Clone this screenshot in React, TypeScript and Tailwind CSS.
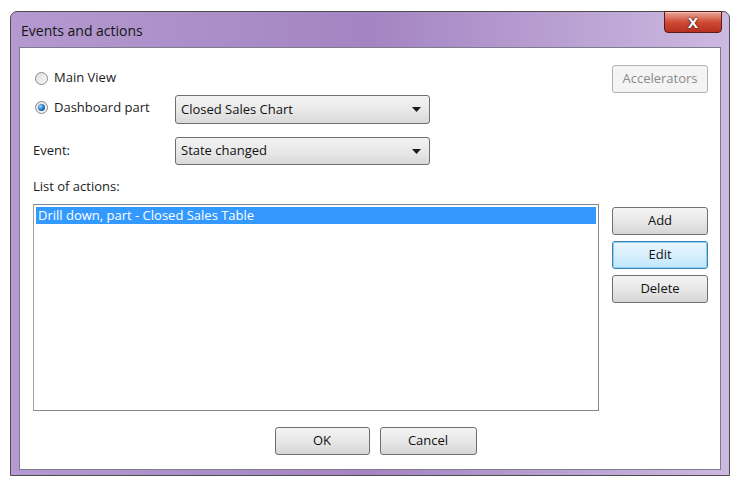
import { ReactNode } from 'react'

const font = { fontFamily: '"Open Sans", "Liberation Sans", Arial, sans-serif' }

function Radio({ checked, label }: { checked?: boolean; label: string }) {
  return (
    <div className="flex h-[16px] items-center gap-[6px]">
      <div className="flex h-[13px] w-[13px] items-center justify-center rounded-full border border-[#8a8a8a] bg-gradient-to-br from-[#dcdcdc] to-[#fbfbfb]">
        {checked && (
          <div className="h-[7px] w-[7px] rounded-full bg-[radial-gradient(circle_at_35%_35%,#9fd4ff,#1f6fc4_55%,#0d3d7a)]" />
        )}
      </div>
      <span className="text-[13px] text-[#1b1b1b]">{label}</span>
    </div>
  )
}

function Select({ value, height }: { value: string; height: string }) {
  return (
    <div
      className={`flex w-[255px] items-center justify-between rounded-[3px] border border-[#6f6f6f] bg-gradient-to-b from-[#f3f3f3] via-[#e9e9e9] to-[#d9d9d9] pl-[5px] pr-[8px] ${height}`}
    >
      <span className="text-[13px] text-[#111]">{value}</span>
      <svg width="9" height="5" viewBox="0 0 9 5">
        <path d="M0 0h9L4.5 5z" fill="#1a1a1a" />
      </svg>
    </div>
  )
}

function Button({ children, focused, disabled, w = 'w-[96px]' }: { children: ReactNode; focused?: boolean; disabled?: boolean; w?: string }) {
  let cls = 'border-[#6f6f6f] bg-gradient-to-b from-[#f4f4f4] via-[#e8e8e8] to-[#d6d6d6] text-[#111]'
  if (focused) cls = 'border-[#3c7fb1] bg-gradient-to-b from-[#eaf6fd] via-[#d9effc] to-[#bee6fd] text-[#111] shadow-[inset_0_0_0_1px_#8fd0f4]'
  if (disabled) cls = 'border-[#adb2b5] bg-[#f4f4f4] text-[#8a8a8a]'
  return (
    <div className={`flex h-[28px] items-center justify-center rounded-[3px] border text-[13px] ${w} ${cls}`}>
      {children}
    </div>
  )
}

export default function App() {
  return (
    <div className="min-h-[477px] w-[739px] bg-white pl-[10px] pt-[11px]" style={font}>
      {/* window frame */}
      <div className="relative flex h-[465px] w-[720px] flex-col rounded-t-[7px] border border-[#4d4d4d] bg-gradient-to-r from-[#b49ad0] via-[#a484c2] to-[#ccb9e0] px-[8px] pb-[5px]">
        {/* title bar */}
        <div className="flex h-[35px] items-center pl-[2px] pt-[1px]">
          <span className="text-[14px] text-[#151515]">Events and actions</span>
        </div>
        {/* close button */}
        <div className="absolute right-[7px] top-[-1px] flex h-[22px] w-[58px] items-center justify-center rounded-b-[4px] border border-[#5a1e17] bg-gradient-to-b from-[#e9a496] via-[#cf4b35] to-[#b6301f] shadow-[inset_0_1px_0_#f3c3b8]">
          <span className="text-[15px] font-bold leading-none text-white [text-shadow:0_0_2px_#3a1410,0_0_1px_#3a1410]">X</span>
        </div>

        {/* client area */}
        <div className="flex flex-1 flex-col border border-[#7d7d8d] bg-white pl-[13px] pr-[12px]">
          <div className="flex justify-between pt-[17px]">
            <div className="flex flex-col pt-[5px]">
              <div className="pl-[2px]">
                <Radio label="Main View" />
              </div>
              <div className="mt-[9px] flex items-center">
                <div className="w-[142px] pl-[2px] pb-[4px]">
                  <Radio checked label="Dashboard part" />
                </div>
                <Select value="Closed Sales Chart" height="h-[29px]" />
              </div>
              <div className="mt-[13px] flex items-center">
                <span className="w-[142px] text-[13px] text-[#1b1b1b]">Event:</span>
                <Select value="State changed" height="h-[28px]" />
              </div>
              <span className="mt-[13px] text-[13px] leading-[16px] text-[#1b1b1b]">List of actions:</span>
            </div>
            <Button disabled>Accelerators</Button>
          </div>

          <div className="mt-[10px] flex justify-between">
            <div className="h-[207px] w-[566px] border border-[#82878c] border-l-[#a0a0a0] bg-white p-[2px]">
              <div className="flex h-[17px] items-center bg-[#3399ff] pl-[2px] text-[13px] text-white">
                Drill down, part - Closed Sales Table
              </div>
            </div>
            <div className="flex flex-col gap-[6px] pt-[3px]">
              <Button>Add</Button>
              <Button focused>Edit</Button>
              <Button>Delete</Button>
            </div>
          </div>

          <div className="mt-[16px] flex justify-center gap-[10px] pl-[10px]">
            <Button w="w-[95px]">OK</Button>
            <Button w="w-[97px]">Cancel</Button>
          </div>
        </div>
      </div>
    </div>
  )
}
